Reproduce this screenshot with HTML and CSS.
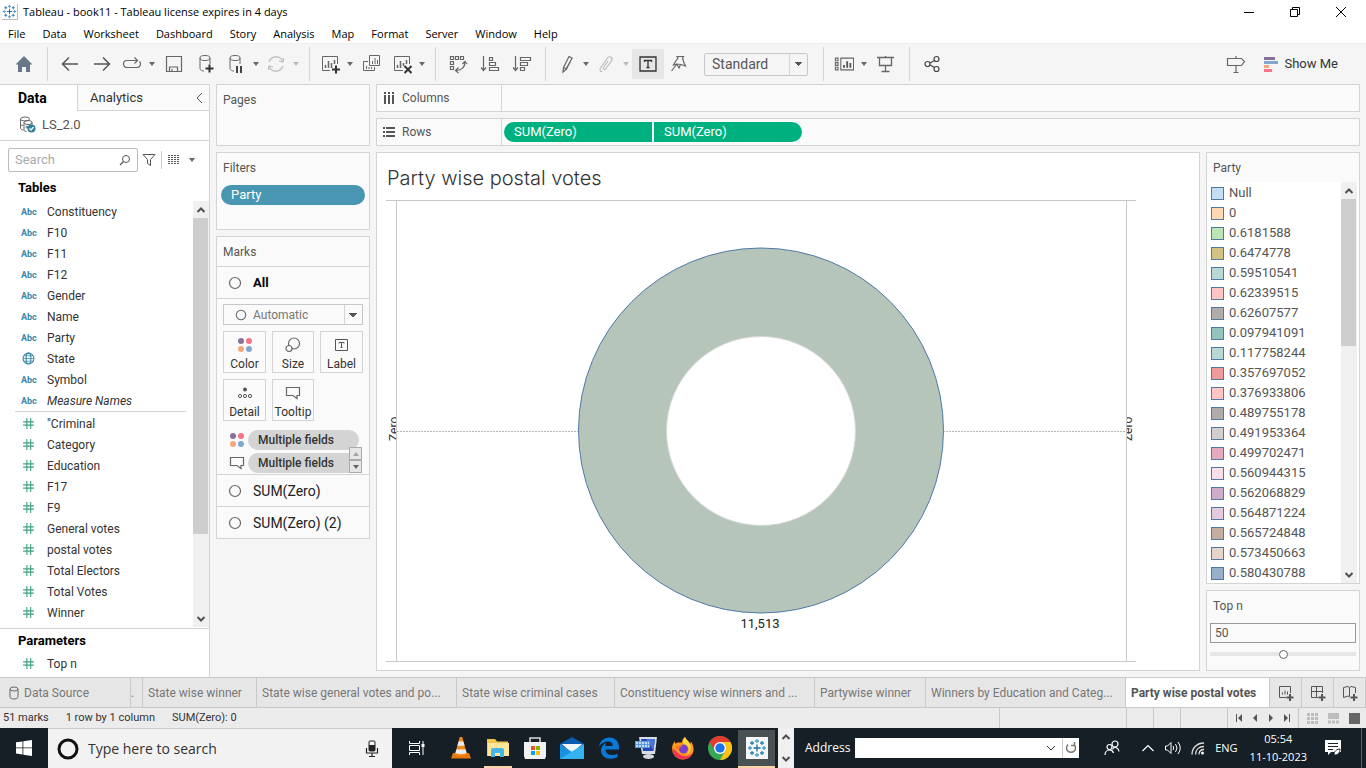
FILE: index.html
```html
<!DOCTYPE html>
<html lang="en">
<head>
<meta charset="utf-8">
<title>Tableau - book11</title>
<link rel="stylesheet" href="styles.css">
</head>
<body>
<svg class="defs" aria-hidden="true">
  <symbol id="hash" viewBox="0 0 12 12"><path d="M4.500 1v10M8 1v10M1 4.500h10M1 7.500h10" fill="none" stroke="#3aa17e" stroke-width="1"/></symbol>
  <symbol id="ring" viewBox="0 0 14 14"><circle cx="7" cy="7" r="5.500" fill="none" stroke="#666" stroke-width="1.200"/></symbol>
  <symbol id="dots" viewBox="0 0 16 16"><circle cx="4" cy="4" r="3" fill="#8a7199"/><circle cx="12" cy="4" r="3" fill="#fb7185"/><circle cx="4" cy="12" r="3" fill="#f4a77c"/><circle cx="12" cy="12" r="3" fill="#82a7cf"/></symbol>
  <symbol id="tip" viewBox="0 0 16 16"><path d="M1.500 2.500h13v8h-2.500v3l-4-3h-6.500z" fill="none" stroke="#666" stroke-width="1.200"/></symbol>
  <symbol id="up" viewBox="0 0 10 10"><path d="M1.500 7L5 3.500 8.500 7" fill="none" stroke="#505050" stroke-width="2"/></symbol>
  <symbol id="down" viewBox="0 0 10 10"><path d="M1.500 3L5 6.500 8.500 3" fill="none" stroke="#505050" stroke-width="2"/></symbol>
  <symbol id="tableau" viewBox="0 0 20 20"><g fill="none" stroke-width="1.300"><path d="M10 6.500v7M6.500 10h7" stroke="#1f6fa3"/><path d="M10 1v4M8 3h4M10 15v4M8 17h4M1 10h4M3 8v4M15 10h4M17 8v4" stroke="#4f9cc4"/><path d="M5 3v4M3 5h4M15 3v4M13 5h4M5 13v4M3 15h4M15 13v4M13 15h4" stroke="#2e7fb0"/></g></symbol>
  <symbol id="cyl" viewBox="0 0 20 20"><g fill="none" stroke="#666"><ellipse cx="9" cy="4" rx="5" ry="2.500"/><path d="M4 4v10.500c0 1.400 2 2.500 4 2.500M14 4v6"/></g></symbol>
</svg>

<header class="titlebar">
  <svg class="app-logo" viewBox="0 0 20 20"><use href="#tableau"/></svg>
  <h1 class="app-title">Tableau - book11 - Tableau license expires in 4 days</h1>
  <div class="win-buttons">
    <button aria-label="Minimize"><svg viewBox="0 0 12 12"><path d="M1 6.500h10" stroke="#000"/></svg></button>
    <button aria-label="Restore"><svg viewBox="0 0 12 12"><path d="M1.500 3.500h7v7h-7zM3.500 3.500v-2h7v7h-2" fill="none" stroke="#000"/></svg></button>
    <button aria-label="Close"><svg viewBox="0 0 12 12"><path d="M1 1l10 10M11 1L1 11" stroke="#000"/></svg></button>
  </div>
</header>

<nav class="menubar">
  <button>File</button><button>Data</button><button>Worksheet</button><button>Dashboard</button><button>Story</button><button>Analysis</button><button>Map</button><button>Format</button><button>Server</button><button>Window</button><button>Help</button>
</nav>

<div class="toolbar">
  <button class="tool" aria-label="Start page"><svg viewBox="0 0 20 20"><path d="M10 2l8.500 8.500H16V18h-4v-5H8v5H4v-7.500H1.500z" fill="#697886"/></svg></button>
  <span class="sep"></span>
  <button class="tool" aria-label="Undo"><svg viewBox="0 0 20 20"><path d="M2.500 10H18M9 3.500L2.500 10 9 16.500" fill="none" stroke="#555" stroke-width="1.500"/></svg></button>
  <button class="tool" aria-label="Redo"><svg viewBox="0 0 20 20"><path d="M2 10h15.500M11 3.500l6.500 6.500-6.500 6.500" fill="none" stroke="#555" stroke-width="1.500"/></svg></button>
  <button class="tool slim" aria-label="Replay"><svg viewBox="0 0 20 20"><path d="M8.500 13.500H5a3.500 3.500 0 0 1 0-7h10.500M12.500 3.500l3 3-3 3M17.500 7.500a3.500 3.500 0 0 1-2.500 6H8" fill="none" stroke="#666" stroke-width="1.200"/></svg></button>
  <button class="caret" aria-label="Replay options"></button>
  <button class="tool" aria-label="Save"><svg viewBox="0 0 20 20"><path d="M2.500 2.500h15v15h-15zM5.500 17v-4h8v4M8 17v-2" fill="none" stroke="#666" stroke-width="1.200"/></svg></button>
  <button class="tool" aria-label="New data source"><svg viewBox="0 0 20 20"><use href="#cyl"/><path d="M13.500 10.500v8M9.500 14.500h8" stroke="#333" stroke-width="2"/></svg></button>
  <button class="tool slim" aria-label="Pause updates"><svg viewBox="0 0 20 20"><use href="#cyl"/><path d="M11 12v7M15 12v7" stroke="#444" stroke-width="2"/></svg></button>
  <button class="caret" aria-label="Update options"></button>
  <button class="tool slim" aria-label="Run update"><svg viewBox="0 0 20 20"><path d="M3 8a7.500 7.500 0 0 1 13.500-1.500M17 12a7.500 7.500 0 0 1-13.500 1.500M17.500 4l-.5 4-4-1M2.500 16l.5-4 4 1" fill="none" stroke="#bbb" stroke-width="1.200"/></svg></button>
  <button class="caret faint" aria-label="Run options"></button>
  <span class="sep"></span>
  <button class="tool slim" aria-label="New worksheet"><svg viewBox="0 0 20 20"><path d="M10 16.500H2.500v-14h15V10" fill="none" stroke="#666"/><path d="M5.500 14v-3M8.500 14V7M11.500 14V9M14.500 10V6" stroke="#666" stroke-width="1.500"/><path d="M16 11.500v8M12 15.500h8" stroke="#333" stroke-width="2"/></svg></button>
  <button class="caret" aria-label="New options"></button>
  <button class="tool" aria-label="Duplicate"><svg viewBox="0 0 20 20"><path d="M7.500 1.500h10v10h-10zM6 7.500H1.500v9h11V13" fill="none" stroke="#666"/><path d="M10.500 10V7M13 10V4M15.500 10V6M4.500 15v-3M7 15v-2M9.500 15v-2" stroke="#666"/></svg></button>
  <button class="tool slim" aria-label="Clear sheet"><svg viewBox="0 0 20 20"><path d="M11 16.500H2.500v-14h15V10" fill="none" stroke="#666"/><path d="M5.500 14v-3M8.500 14V7M11.500 12V9M14.500 10V6" stroke="#666" stroke-width="1.500"/><path d="M12.500 12l7 7M19.500 12l-7 7" stroke="#333" stroke-width="2"/></svg></button>
  <button class="caret" aria-label="Clear options"></button>
  <span class="sep"></span>
  <button class="tool" aria-label="Swap rows and columns"><svg viewBox="0 0 20 20"><path d="M2.500 2.500h3v3h-3zM7.500 2.500h3v3h-3zM12.500 2.500h3v3h-3zM2.500 7.500h3v3h-3zM2.500 12.500h3v3h-3zM17 8c0 5-3 8-9 8.500M14.500 10L17 7.500l2 2.500M10.500 13.500L7.500 16.500l3 2.500" fill="none" stroke="#666" stroke-width="1.200"/></svg></button>
  <button class="tool" aria-label="Sort ascending"><svg viewBox="0 0 20 20"><path d="M3.500 2v14M1 13.500l2.500 3 2.500-3M9.500 3.500h3v3h-3zM9.500 8.500h6v3h-6zM9.500 13.500h9v3h-9z" fill="none" stroke="#666" stroke-width="1.200"/></svg></button>
  <button class="tool" aria-label="Sort descending"><svg viewBox="0 0 20 20"><path d="M3.500 2v14M1 13.500l2.500 3 2.500-3M8.500 3.500h10v3h-10zM8.500 8.500h7v3h-7zM8.500 13.500h4v3h-4z" fill="none" stroke="#666" stroke-width="1.200"/></svg></button>
  <span class="sep"></span>
  <button class="tool slim" aria-label="Highlight"><svg viewBox="0 0 20 20"><path d="M13 2.500l3 1.500-5.500 11-3.500 3 .5-4.500zM7.500 13.500l3 1.500M15 6L10 15" fill="none" stroke="#666" stroke-width="1.200"/></svg></button>
  <button class="caret" aria-label="Highlight options"></button>
  <button class="tool slim" aria-label="Group members"><svg viewBox="0 0 20 20"><path d="M12 7l-4.500 6.500c-1 1.500 1 3 2 1.500L15.500 7c2-3-2-6-4-3L4.500 14c-1.500 2.500.5 4 2 3.500" fill="none" stroke="#bbb" stroke-width="1.200"/></svg></button>
  <button class="caret faint" aria-label="Group options"></button>
  <button class="tool on" aria-label="Show mark labels"><svg viewBox="0 0 20 20"><path d="M2 3h16v14H2zM6.500 8V6.500h7V8M10 6.500v7M8.500 13.500h3" fill="none" stroke="#333" stroke-width="1.300"/></svg></button>
  <button class="tool slim" aria-label="Fix axes"><svg viewBox="0 0 20 20"><path d="M9 2.500h6.500l-1 1.500 1.500 5 1.500 3-4.500-1.500-4.500-.5-3 1 2-3.500 2.500-3.500zM8.500 10.500L3.500 17M9 10.500l2 3.500 1.500-3.500" fill="none" stroke="#666" stroke-width="1.200"/></svg></button>
  <select class="fit" aria-label="Fit"><option>Standard</option></select>
  <span class="sep"></span>
  <button class="tool slim" aria-label="Show or hide cards"><svg viewBox="0 0 22 20"><path d="M1.500 3.500h3v3h-3zM1.500 8.500h3v3h-3zM1.500 13.500h3v3h-3zM7.500 3.500h14v13h-14z" fill="none" stroke="#666" stroke-width="1.200"/><path d="M11 14v-3M14.500 14V7M18 14V9" stroke="#555" stroke-width="2"/></svg></button>
  <button class="caret" aria-label="Card options"></button>
  <button class="tool" aria-label="Presentation mode"><svg viewBox="0 0 20 20"><path d="M1 3.500h17M3.500 3.500v8h12v-8M9.500 2v1M9.500 11.500v6M5.500 17.500h8" fill="none" stroke="#666" stroke-width="1.300"/></svg></button>
  <span class="sep"></span>
  <button class="tool" aria-label="Share"><svg viewBox="0 0 20 20"><g fill="none" stroke="#444" stroke-width="1.200"><circle cx="5.500" cy="10" r="2.500"/><circle cx="14.500" cy="5" r="2.500"/><circle cx="14.500" cy="15" r="2.500"/><path d="M8 9l4.500-2.500M8 11l4.500 2.500"/></g></svg></button>
  <button class="tool end" aria-label="Guide"><svg viewBox="0 0 20 20"><path d="M1.500 4.500h14l3 3-3 4h-14zM10 2v2M10 11.500v7M7.500 18.500h5" fill="none" stroke="#666" stroke-width="1.200"/></svg></button>
  <button class="showme"><svg viewBox="0 0 14 16"><path d="M0 2.500h11" stroke="#8a7199" stroke-width="3"/><path d="M0 6.500h14" stroke="#82a7cf" stroke-width="3"/><path d="M0 10.500h5" stroke="#f4a77c" stroke-width="3"/><path d="M0 14.500h8" stroke="#fb7185" stroke-width="3"/></svg>Show Me</button>
</div>

<main class="work">
  <aside class="side">
    <div class="side-tabs">
      <button class="side-tab on">Data</button>
      <button class="side-tab">Analytics<svg viewBox="0 0 10 12"><path d="M8 1L3 6l5 5" fill="none" stroke="#555"/></svg></button>
    </div>
    <div class="source"><svg viewBox="0 0 18 18"><g fill="none" stroke="#666"><ellipse cx="6" cy="3" rx="4.500" ry="2"/><path d="M1.500 3v9c0 1 1 2 3 2M1.500 8c0 1 1 1.500 3 1.500"/><ellipse cx="9" cy="6.500" rx="4" ry="2"/><path d="M5 6.500V14c0 1 1 1.500 2.500 1.500M13 6.500V9M8 9.500v3M6.500 11h3"/></g><circle cx="12.500" cy="12.500" r="4" fill="#2f7f9f"/><path d="M10.500 12.500l1.500 1.500 2.500-3" fill="none" stroke="#fff" stroke-width="1.200"/></svg>LS_2.0</div>
    <div class="find">
      <label class="find-box"><input type="text" placeholder="Search" aria-label="Search"><svg viewBox="0 0 12 12"><circle cx="7" cy="5" r="3.500" fill="none" stroke="#555"/><path d="M4.500 7.500L1 11" stroke="#555" stroke-width="1.300"/></svg></label>
      <button class="find-btn" aria-label="Filter"><svg viewBox="0 0 14 14"><path d="M1 1.500h12l-4.500 5v6l-3-2v-4z" fill="none" stroke="#555"/></svg></button>
      <button class="find-btn as-list" aria-label="View as list"><svg viewBox="0 0 12 12"><path d="M0 1.500h12M0 3.500h12M0 5.500h12M0 7.500h12M0 9.500h12" stroke="#555" stroke-dasharray="2 1"/></svg><i class="tri"></i></button>
    </div>
    <h2 class="side-head">Tables</h2>
    <div class="fields">
      <div class="field-lists">
        <ul class="list">
          <li><b>Abc</b>Constituency</li><li><b>Abc</b>F10</li><li><b>Abc</b>F11</li><li><b>Abc</b>F12</li><li><b>Abc</b>Gender</li><li><b>Abc</b>Name</li><li><b>Abc</b>Party</li>
          <li><svg viewBox="0 0 12 12"><g fill="none" stroke="#3a87a5"><circle cx="6" cy="6" r="5"/><ellipse cx="6" cy="6" rx="2.200" ry="5"/><path d="M1 6h10M2 3.500h8M2 8.500h8" stroke-width=".7"/></g></svg>State</li>
          <li><b>Abc</b>Symbol</li><li><b>Abc</b><em>Measure Names</em></li>
        </ul>
        <ul class="list measures">
          <li><svg><use href="#hash"/></svg>"Criminal</li><li><svg><use href="#hash"/></svg>Category</li><li><svg><use href="#hash"/></svg>Education</li><li><svg><use href="#hash"/></svg>F17</li><li><svg><use href="#hash"/></svg>F9</li><li><svg><use href="#hash"/></svg>General votes</li><li><svg><use href="#hash"/></svg>postal votes</li><li><svg><use href="#hash"/></svg>Total Electors</li><li><svg><use href="#hash"/></svg>Total Votes</li><li><svg><use href="#hash"/></svg>Winner</li>
        </ul>
      </div>
      <div class="scroll"><button aria-label="Scroll up"><svg><use href="#up"/></svg></button><span class="thumb tall"></span><span class="track"></span><button aria-label="Scroll down"><svg><use href="#down"/></svg></button></div>
    </div>
    <section class="params">
      <h2 class="side-head">Parameters</h2>
      <ul class="list"><li><svg><use href="#hash"/></svg>Top n</li></ul>
    </section>
  </aside>

  <div class="cards">
    <section class="card pages"><h3>Pages</h3></section>
    <section class="card filters"><h3>Filters</h3><button class="pill blue">Party</button></section>
    <section class="card marks">
      <h3>Marks</h3>
      <button class="mark-row all"><svg><use href="#ring"/></svg>All</button>
      <div class="mark-body">
        <div class="type-box"><svg><use href="#ring"/></svg><select class="type" aria-label="Mark type"><option>Automatic</option></select></div>
        <div class="mark-grid">
          <button><svg><use href="#dots"/></svg>Color</button>
          <button><svg viewBox="0 0 16 16"><g fill="none" stroke="#666" stroke-width="1.200"><circle cx="9" cy="6.500" r="5.500"/><circle cx="4" cy="11.500" r="3" fill="#fafafa"/></g></svg>Size</button>
          <button><svg viewBox="0 0 16 16"><path d="M1.500 2.500h12v11h-12zM5 6.500V5.500h5v1M7.500 5.500v5M6.500 10.500h2" fill="none" stroke="#555"/></svg>Label</button>
          <button><svg viewBox="0 0 16 16"><circle cx="8" cy="4.500" r="2" fill="#555"/><g fill="none" stroke="#555"><circle cx="3" cy="11" r="1.600"/><circle cx="8" cy="11" r="1.600"/><circle cx="13" cy="11" r="1.600"/></g></svg>Detail</button>
          <button><svg><use href="#tip"/></svg>Tooltip</button>
        </div>
        <div class="mark-pills">
          <div><svg><use href="#dots"/></svg><button class="pill grey">Multiple fields</button></div>
          <div><svg><use href="#tip"/></svg><button class="pill grey">Multiple fields</button></div>
          <span class="spin"><button aria-label="Previous"><i class="tri flip"></i></button><button aria-label="Next"><i class="tri"></i></button></span>
        </div>
      </div>
      <button class="mark-row"><svg><use href="#ring"/></svg>SUM(Zero)</button>
      <button class="mark-row"><svg><use href="#ring"/></svg>SUM(Zero) (2)</button>
    </section>
  </div>

  <div class="stage">
    <div class="shelf"><div class="shelf-name"><svg viewBox="0 0 12 12"><path d="M2 0v2M6 0v2M10 0v2M2 3v9M6 3v9M10 3v9" stroke="#555" stroke-width="2"/></svg>Columns</div></div>
    <div class="shelf"><div class="shelf-name"><svg viewBox="0 0 12 12"><path d="M0 2h2M0 6h2M0 10h2M3 2h9M3 6h9M3 10h9" stroke="#555" stroke-width="2"/></svg>Rows</div><div class="shelf-pills"><button class="pill green left">SUM(Zero)</button><button class="pill green right">SUM(Zero)</button></div></div>
    <div class="stage-row">
      <section class="view">
        <h2 class="view-title">Party wise postal votes</h2>
        <svg class="chart" viewBox="0 0 750 462" role="img" aria-label="Donut chart of postal votes">
          <path d="M0 .5h750M0 461.500h750M10.500 0v462M740.500 0v462" stroke="#c8c8c8"/>
          <path d="M11 231.500h729" stroke="#b8b8b8" stroke-dasharray="2 1"/>
          <svg x="0" y="200" width="10" height="60"><text class="axis" transform="translate(12 41) rotate(-90)">Zero</text></svg>
          <svg x="741" y="200" width="9" height="60"><text class="axis" transform="translate(5 41) rotate(-90)">Zero</text></svg>
          <circle cx="375" cy="230.500" r="182.500" fill="#b6c5ba" stroke="#4e79a7"/>
          <circle cx="375" cy="231" r="94.500" fill="#fff" stroke="#d5d8d5"/>
          <text class="total" x="374" y="428" text-anchor="middle">11,513</text>
        </svg>
      </section>
      <div class="panels">
        <section class="card legend">
          <h3>Party</h3>
          <div class="legend-body">
            <ul>
              <li><i style="background:#c6def3"></i>Null</li><li><i style="background:#ffd8b2"></i>0</li><li><i style="background:#bce5b5"></i>0.6181588</li><li><i style="background:#d3c283"></i>0.6474778</li><li><i style="background:#b9d7d6"></i>0.59510541</li><li><i style="background:#ffc5c5"></i>0.62339515</li><li><i style="background:#b1abaa"></i>0.62607577</li><li><i style="background:#94c3bf"></i>0.097941091</li><li><i style="background:#b9d7d6"></i>0.117758244</li><li><i style="background:#f09b9b"></i>0.357697052</li><li><i style="background:#ffc5c5"></i>0.376933806</li><li><i style="background:#b1abaa"></i>0.489755178</li><li><i style="background:#d2cecd"></i>0.491953364</li><li><i style="background:#e5aabf"></i>0.499702471</li><li><i style="background:#fcdde8"></i>0.560944315</li><li><i style="background:#cfadc9"></i>0.562068829</li><li><i style="background:#e5cadf"></i>0.564871224</li><li><i style="background:#c4aca0"></i>0.565724848</li><li><i style="background:#e7d3ca"></i>0.573450663</li><li><i style="background:#96afcb"></i>0.580430788</li>
            </ul>
            <div class="scroll"><button aria-label="Scroll up"><svg><use href="#up"/></svg></button><span class="thumb short"></span><span class="track"></span><button aria-label="Scroll down"><svg><use href="#down"/></svg></button></div>
          </div>
        </section>
        <section class="card topn">
          <h3>Top n</h3>
          <input class="num" type="text" value="50" aria-label="Top n value">
          <input class="slider" type="range" min="0" max="100" value="50" aria-label="Top n slider">
        </section>
      </div>
    </div>
  </div>
</main>

<nav class="tabs">
  <button class="tab ds"><svg viewBox="0 0 10 14"><g fill="none" stroke="#666"><ellipse cx="5" cy="3" rx="4" ry="2"/><path d="M1 3v8c0 1 1.500 2 4 2s4-1 4-2V3"/></g></svg>Data Source</button>
  <button class="tab dot">.</button>
  <button class="tab w114">State wise winner</button>
  <button class="tab w200">State wise general votes and po...</button>
  <button class="tab w158">State wise criminal cases</button>
  <button class="tab w200">Constituency wise winners and ...</button>
  <button class="tab w111">Partywise winner</button>
  <button class="tab w200">Winners by Education and Categ...</button>
  <button class="tab on">Party wise postal votes</button>
  <button class="tab new" aria-label="New worksheet tab"><svg viewBox="0 0 16 16"><path d="M8 12.500H1.500v-11h11V8" fill="none" stroke="#555"/><path d="M4.500 9.500v-2M7 9.500v-4M9.500 9.500v-3" stroke="#555"/><path d="M12 9v7M8.500 12.500h7" stroke="#555" stroke-width="2"/></svg></button>
  <button class="tab new" aria-label="New dashboard tab"><svg viewBox="0 0 16 16"><path d="M8 12.500H1.500v-11h11V8M1.500 6.500h11M6.500 1.500v11" fill="none" stroke="#555"/><path d="M12 9v7M8.500 12.500h7" stroke="#555" stroke-width="2"/></svg></button>
  <button class="tab new" aria-label="New story tab"><svg viewBox="0 0 16 16"><path d="M8 12l-2-1-4.500 1.500v-10L6 1.500l1.500 1 1.500-1 4.500 1V8M7.500 2.500V11" fill="none" stroke="#555"/><path d="M12 9v7M8.500 12.500h7" stroke="#555" stroke-width="2"/></svg></button>
</nav>

<footer class="status">
  <span>51 marks</span><span>1 row by 1 column</span><span>SUM(Zero): 0</span>
  <div class="cells"><i class="c127"></i><i class="c27"></i><i class="c27"></i><i class="c47"></i>
    <div class="pager">
      <button aria-label="First"><svg viewBox="0 0 8 8"><path d="M1.500 0v8" stroke="#555"/><path d="M7 0v8L3 4z" fill="#555"/></svg></button>
      <button aria-label="Previous sheet"><svg viewBox="0 0 8 8"><path d="M6 0v8L2 4z" fill="#555"/></svg></button>
      <button aria-label="Next sheet"><svg viewBox="0 0 8 8"><path d="M2 0v8l4-4z" fill="#555"/></svg></button>
      <button aria-label="Last"><svg viewBox="0 0 8 8"><path d="M6.500 0v8" stroke="#555"/><path d="M1 0v8l4-4z" fill="#555"/></svg></button>
    </div>
    <div class="modes">
      <button aria-label="Sheet sorter"><svg viewBox="0 0 11 11"><path d="M0 1.500h11M0 5.500h11M0 9.500h11" stroke="#bdbdbd" stroke-width="3" stroke-dasharray="3 1"/></svg></button>
      <button aria-label="Filmstrip"><svg viewBox="0 0 11 11"><path d="M0 3h11" stroke="#bdbdbd" stroke-width="6"/><path d="M0 9h11" stroke="#bdbdbd" stroke-width="3" stroke-dasharray="3 1"/></svg></button>
      <button aria-label="Tabs"><svg viewBox="0 0 11 11"><path d="M0 0h11v11H0z" fill="#666"/></svg></button>
    </div>
  </div>
</footer>

<div class="taskbar">
  <button class="start" aria-label="Start"><svg viewBox="0 0 16 16"><path d="M0 2.300L6.500 1.400v6.100H0zM7.300 1.300L16 0v7.500H7.300zM0 8.300h6.500v6.200L0 13.600zM7.300 8.300H16V16l-8.700-1.300z" fill="#fff"/></svg></button>
  <label class="tsearch"><svg class="cortana" viewBox="0 0 24 24"><circle cx="12" cy="12" r="9" fill="none" stroke="#111" stroke-width="3"/></svg><input type="text" placeholder="Type here to search" aria-label="Type here to search"><svg class="mic" viewBox="0 0 14 18"><rect x="4" y="1" width="6" height="10" rx="1" fill="none" stroke="#222"/><path d="M4 5h6v6H4z" fill="#222"/><path d="M1.500 8v5h11V8M7 13v3.500M4 16.500h6" fill="none" stroke="#222" stroke-width="1.200"/></svg></label>
  <div class="apps">
    <button class="app view-btn" aria-label="Task view"><svg viewBox="0 0 20 20"><path d="M2.500 3v2.500h10V3M2.500 17v-2.500h10V17M2.500 7.500h10v5h-10zM16 3v14" fill="none" stroke="#fff"/><path d="M14.500 6h3v3h-3z" fill="#fff"/></svg></button>
    <button class="app" aria-label="VLC"><svg viewBox="0 0 24 24"><path d="M4 17h16l2 5.500H2z" fill="#e87809"/><path d="M10.700 1h2.600L18 18.500c-3 2-9 2-12 0z" fill="#f08a1c"/><path d="M9.600 5.500h4.800l1.200 4.300H8.400zM7.300 13.500h9.400l.9 3.500c-3 1.500-8 1.500-11.200 0z" fill="#e9edf1"/></svg></button>
    <button class="app run" aria-label="File Explorer"><svg viewBox="0 0 24 24"><path d="M1 3h8l2 2.500h11V20H1z" fill="#f3c74f"/><path d="M2 7h21v13H2z" fill="#ffe69a"/><path d="M5 21v-7q0-2 2-2h9q2 0 2 2v7h-4v-4H9v4z" fill="#42b6e8"/></svg></button>
    <button class="app" aria-label="Microsoft Store"><svg viewBox="0 0 24 24"><path d="M7 7V2h10v5" fill="none" stroke="#ddd" stroke-width="1.500"/><path d="M1 6h22v14l-1 3H2l-1-3z" fill="#f2f2f2"/><path d="M8 10h4v4H8z" fill="#f25022"/><path d="M13 10h4v4h-4z" fill="#7fba00"/><path d="M8 15h4v4H8z" fill="#00a4ef"/><path d="M13 15h4v4h-4z" fill="#ffb900"/></svg></button>
    <button class="app" aria-label="Mail"><svg viewBox="0 0 24 24"><path d="M0 8l12-7 12 7v2H0z" fill="#0a5cb0"/><path d="M2 8h20L12 18z" fill="#eef5fb"/><path d="M0 8l12 8 12-8v15H0z" fill="#1a91e0"/><path d="M2 8h20l-10 7.500z" fill="#eef5fb"/><path d="M0 23L24 8v15z" fill="#35b2f0"/></svg></button>
    <button class="app" aria-label="Edge"><svg viewBox="0 0 24 24"><path d="M2 10.500C3 5 7 1.500 12.500 1.500 18.500 1.500 22 6 22 11v2.500H8.500c.2 4 3 5.500 6.500 5.500 2 0 4-.5 5.500-1.500V21c-2 1.200-4.500 1.800-7 1.800-6 0-9.500-3.800-9.500-8.300C4 11 6 8 9.500 6.500c-.8 1-1.200 2-1.300 3.500h7.500c0-3-1.500-4.500-4.500-4.500C7.500 5.500 4 7.500 2 10.500z" fill="#0b78d7"/></svg></button>
    <button class="app" aria-label="On-screen keyboard"><svg viewBox="0 0 24 24"><path d="M5 1h18l-2 17H8z" fill="#d9dde6"/><path d="M7 3h14l-1.500 12H9z" fill="#2248b8"/><path d="M12 3h9l-1.500 11z" fill="#4b73d8"/><ellipse cx="14.500" cy="20.500" rx="5.500" ry="2.500" fill="#d3d5db"/><path d="M1 5h15v7H1z" fill="#5b9ad8"/><path d="M2 7h13M2 10h13" stroke="#e8f2fb" stroke-width="1.500" stroke-dasharray="2 1"/></svg></button>
    <button class="app" aria-label="Firefox"><svg viewBox="0 0 24 24"><path d="M14 1c1 3 4 4 5 7 1-1 1-2 .5-3 2.500 3 3.500 6.500 3 10A11 11 0 0 1 12 23.500 11 11 0 0 1 1 13c0-4 1.500-6 3-8v3c1-1 2-1.500 4-1.500h3C11 4 12 2.500 14 1z" fill="#ff9a1f"/><path d="M14 1c1 3 4 4 5 7 2 5 0 9-3 10 5-6-1-10-4-10 0-3 0-5 2-7z" fill="#ffd93b"/><path d="M1.500 12C1.500 20 7 23.500 12 23.500c5 0 9-3 10-7-3 3-5 3.500-8 3.500-6 0-8-5-12.500-8z" fill="#f5344f"/><circle cx="12.500" cy="13" r="4.500" fill="#7a3fd0"/><path d="M4 10c4 0 6-1 8 0-2 1-4 1-4 4-2-1-4-2-4-4z" fill="#ff7a1a"/></svg></button>
    <button class="app" aria-label="Chrome"><svg viewBox="0 0 24 24"><circle cx="12" cy="12" r="12" fill="#34a853"/><path d="M1.600 6A12 12 0 0 1 22.400 6H12l-5.200 9z" fill="#e33b2e"/><path d="M22.400 6A12 12 0 0 1 12 24l5.200-9L12 6z" fill="#fbc116"/><circle cx="12" cy="12" r="6" fill="#fff"/><circle cx="12" cy="12" r="4.700" fill="#1a73e8"/></svg></button>
    <button class="app run active" aria-label="Tableau"><svg viewBox="-2 -2 24 24"><path d="M-1-1h22v22H-1z" fill="#f4f7f9"/><use href="#tableau" width="20" height="20"/></svg></button>
  </div>
  <div class="tscroll"><button aria-label="Toolbar up"><svg><use href="#up"/></svg></button><button aria-label="Toolbar down"><svg><use href="#down"/></svg></button></div>
  <label class="addr">Address<span class="addr-box"><input type="text"><svg viewBox="0 0 10 10"><path d="M1 3l4 4 4-4" fill="none" stroke="#333"/></svg></span></label>
  <button class="reload" aria-label="Refresh"><svg viewBox="0 0 12 12"><path d="M3 2.500a4.500 4.500 0 1 0 6 0M9.500 0v3.500H6" fill="none" stroke="#777" stroke-width="1.500"/></svg></button>
  <div class="tray">
    <button class="people" aria-label="People"><svg viewBox="0 0 16 16"><g fill="none" stroke="#fff" stroke-width="1.200"><circle cx="5.500" cy="7" r="2.500"/><path d="M1 15c0-3 2-5 4.500-5S9 11 9.500 13"/><circle cx="11" cy="4" r="3"/><path d="M8.500 9.500C9 8 10 7.500 11 7.500c2 0 3.500 1.500 4 4"/></g></svg></button>
    <button aria-label="Hidden icons"><svg viewBox="0 0 16 16"><path d="M2.500 11L8 5.500l5.500 5.500" fill="none" stroke="#fff" stroke-width="1.200"/></svg></button>
    <button aria-label="Volume"><svg viewBox="0 0 16 16"><path d="M.5 6h2l3.500-3.500v11L2.500 10h-2zM8 6q1.500 2 0 4M10.500 4q3 4 0 8M13 2q4.500 6 0 12" fill="none" stroke="#fff"/></svg></button>
    <button aria-label="Network"><svg viewBox="0 0 16 16"><path d="M2 14.500C2 8 7 3 14 3M5.500 14.500c0-5 3.500-8 8.500-8M9 14.500c0-3 2-5 5-5" fill="none" stroke="#ddd" stroke-width="1.300"/><circle cx="12.500" cy="13" r="1.500" fill="#fff"/></svg></button>
    <button class="lang">ENG</button>
    <button class="clock"><span>05:54</span><span>11-10-2023</span></button>
    <button class="notes" aria-label="Notifications"><svg viewBox="0 0 18 18"><path d="M1 1h16v12H7l-3 3v-3H1z" fill="#fff"/><path d="M4 4.500h10M4 7.500h10M4 10.500h5" stroke="#17212a" stroke-width="1.200"/><path d="M10 16c0-4 3-6 6-6 0 4-2 6-6 6z" fill="#fff" stroke="#17212a"/></svg></button>
  </div>
  <button class="peek" aria-label="Show desktop"></button>
</div>
</body>
</html>
```

FILE: styles.css
```css
* { box-sizing: border-box; }
body {
  margin: 0;
  min-height: 100vh;
  display: flex;
  flex-direction: column;
  background: #f5f5f5;
  color: #333;
  font: 12px/20px Roboto, "Liberation Sans", sans-serif;
}
button, input, select { font: inherit; color: inherit; border: 0; padding: 0; margin: 0; background: none; border-radius: 0; }
button { display: flex; align-items: center; white-space: nowrap; }
h1, h2, h3, ul { margin: 0; padding: 0; font: inherit; list-style: none; }
svg { flex: none; display: block; }
.defs { position: absolute; width: 0; height: 0; }

/* window chrome */
.titlebar { display: flex; align-items: center; height: 24px; padding: 0 2px 0 2px; background: #fff; color: #000; font: 11px/16px "Open Sans", sans-serif; }
.app-logo { width: 16px; height: 16px; border: 1px solid #bbb; border-width: 0 1px 1px 0; }
.app-title { margin-left: 5px; flex: 1; }
.win-buttons { display: flex; }
.win-buttons button { width: 46px; height: 20px; justify-content: center; }
.win-buttons svg { width: 12px; height: 12px; }
.menubar { display: flex; gap: 17px; height: 19px; padding-left: 8px; background: #fff; color: #000; font: 11px/16px "Open Sans", sans-serif; }

/* toolbar */
.toolbar { display: flex; align-items: center; height: 41px; padding: 0 28px 0 8px; border-top: 1px solid #eee; }
.tool { width: 32px; height: 30px; justify-content: center; }
.tool.slim { width: 28px; }
.tool svg { width: 20px; height: 20px; }
.tool.on { background: #e6e6e6; }
.tool.end { margin-left: auto; }
.sep { width: 1px; height: 34px; margin: 0 6px 0 7px; background: #d4d4d4; }
.caret { width: 12px; height: 30px; justify-content: center; }
.caret::after, .tri { content: ""; border: 3px solid transparent; border-top: 4px solid #666; border-bottom: 0; }
.caret.faint::after { border-top-color: #bbb; }
.fit { width: 104px; height: 23px; margin: 0 8px 0 12px; padding-left: 7px; font-size: 14px; color: #555; border: 1px solid #c8c8c8; border-radius: 2px; }
.fit, .type {
  appearance: none;
  background: linear-gradient(#d4d4d4, #d4d4d4) right 17px top 0 / 1px 100% no-repeat,
    linear-gradient(45deg, transparent 50%, #555 50%) right 8px center / 4px 4px no-repeat,
    linear-gradient(-45deg, transparent 50%, #555 50%) right 4px center / 4px 4px no-repeat;
}
/* downward triangle drawn from two right-angled halves */
.fit, .type {
  background: linear-gradient(#d4d4d4, #d4d4d4) right 17px top 0 / 1px 100% no-repeat,
    linear-gradient(45deg, transparent 50%, #555 50%) right 9px center / 4px 4px no-repeat,
    linear-gradient(-45deg, transparent 50%, #555 50%) right 5px center / 4px 4px no-repeat;
}
.showme { gap: 6px; margin-left: 12px; font-size: 13px; color: #333; }
.showme svg { width: 14px; height: 16px; }

/* work area */
.work { flex: 1; display: flex; gap: 6px; padding-right: 6px; }
.side { display: flex; flex-direction: column; width: 210px; flex: none; background: #fff; border: 1px solid #d4d4d4; border-width: 1px 1px 0 0; }
.side-tabs { display: flex; height: 26px; }
.side-tab { flex: 1; padding: 0 5px 0 12px; font-size: 13px; justify-content: space-between; background: #fafafa; border: 1px solid #d4d4d4; border-width: 0 0 1px 1px; }
.side-tab.on { flex: 0 0 77px; padding-left: 18px; font-size: 14px; font-weight: 700; color: #000; background: #fff; border: 0; }
.side-tab svg { width: 10px; height: 12px; }
.source { display: flex; align-items: center; gap: 5px; height: 30px; padding: 0 0 2px 19px; color: #555; font-size: 13px; border-bottom: 1px solid #d4d4d4; }
.source svg { width: 18px; height: 18px; }
.find { display: flex; align-items: center; height: 38px; padding-left: 8px; }
.find-box { display: flex; align-items: center; width: 130px; height: 24px; padding: 0 6px; border: 1px solid #bbb; border-radius: 2px; }
.find-box input { flex: 1; min-width: 0; outline: 0; font-size: 13px; }
.find-box input::placeholder { color: #aaa; }
.find-box svg { width: 12px; height: 12px; }
.find-btn { height: 18px; margin-left: 4px; gap: 9px; }
.find-btn svg { width: 14px; height: 14px; }
.find-btn.as-list { margin-left: 5px; padding-left: 6px; border-left: 1px solid #ccc; }
.find-btn.as-list svg { width: 12px; height: 12px; }
.side-head { padding-left: 18px; font-size: 13px; line-height: 18px; font-weight: 700; color: #000; }
.fields { flex: 1; display: flex; margin-top: 4px; }
.field-lists { flex: 1; }
.list li { display: flex; align-items: center; height: 21px; padding-left: 21px; }
.list b, .list svg { width: 26px; flex: none; color: #3a87a5; font-size: 9px; }
.list b { font-weight: 700; }
.list svg { width: 13px; height: 13px; margin: 0 12px 0 1px; }
.measures { margin: 0 7px 0 15px; border-top: 1px solid #d4d4d4; padding-top: 1px; }
.measures li { padding-left: 6px; }
.scroll { display: flex; flex-direction: column; width: 16px; background: #f0f0f0; }
.fields .scroll { margin-bottom: 1px; }
.scroll button { height: 17px; justify-content: center; }
.scroll svg { width: 10px; height: 10px; }
.thumb { background: #cdcdcd; margin-right: 1px; }
.tall { flex: 314; }
.tall + .track { flex: 76; }
.short { flex: 147; }
.short + .track { flex: 220; }
.params { height: 49px; border-top: 1px solid #d4d4d4; }
.params .side-head { padding-top: 3px; }
.params .list { padding-top: 3px; }

.cards { display: flex; flex-direction: column; gap: 6px; width: 154px; flex: none; }
.card { background: #fafafa; border: 1px solid #d4d4d4; color: #555; }
.card h3 { height: 30px; padding: 5px 6px 0; font-size: 12px; }
.pages { height: 62px; }
.filters { height: 78px; }
.pill { height: 20px; padding: 0 10px; border-radius: 10px; color: #fff; }
.blue { width: 144px; margin: 2px 0 0 4px; background: #4996b2; font-size: 13px; }
.marks h3 { height: 29px; }
.mark-row { width: 100%; height: 32px; padding-left: 11px; gap: 11px; border-top: 1px solid #d4d4d4; font-size: 14px; color: #222; }
.mark-row svg { width: 14px; height: 14px; }
.all { font-size: 13px; font-weight: 700; color: #000; border-bottom: 1px solid #d4d4d4; height: 33px; }
.mark-body { padding: 5px 6px 0; }
.type-box { position: relative; }
.type-box svg { position: absolute; left: 12px; top: 5px; width: 12px; height: 12px; }
.type { display: block; width: 100%; height: 21px; padding-left: 29px; color: #777; border: 1px solid #c8c8c8; }
.mark-grid { display: grid; grid-template-columns: 43px 42px 43px; justify-content: space-between; row-gap: 6px; margin-top: 6px; }
.mark-grid button { flex-direction: column; height: 42px; padding-top: 5px; gap: 1px; border: 1px solid #d4d4d4; color: #333; }
.mark-grid svg { width: 16px; height: 16px; }
.mark-pills { position: relative; display: grid; gap: 3px; margin: 9px 0 1px; }
.mark-pills > div { display: flex; align-items: center; gap: 4px; height: 20px; padding-left: 6px; }
.mark-pills svg { width: 16px; height: 16px; }
.grey { width: 111px; margin-left: -1px; background: #d4d4d4; color: #333; font-weight: 500; }
.spin { position: absolute; right: 1px; bottom: 0; display: grid; }
.spin button { width: 13px; height: 13px; justify-content: center; border: 1px solid #aaa; background: #e6e6e6; }
.flip { transform: rotate(180deg); opacity: .5; }

.stage { flex: 1; min-width: 0; display: flex; flex-direction: column; gap: 6px; padding-bottom: 6px; }
.shelf { display: flex; height: 28px; background: #fafafa; border: 1px solid #d4d4d4; }
.shelf-name { display: flex; align-items: center; gap: 7px; width: 125px; padding-left: 6px; color: #555; border-right: 1px solid #d4d4d4; }
.shelf-name svg { width: 12px; height: 12px; }
.shelf-pills { display: flex; align-items: center; gap: 2px; padding-left: 2px; }
.green { width: 148px; background: #00b180; font-size: 13px; }
.left { border-radius: 10px 0 0 10px; }
.right { border-radius: 0 10px 10px 0; }
.stage-row { flex: 1; display: flex; gap: 6px; }
.view { flex: 1; min-width: 0; padding: 10px 9px 0; background: #fff; border: 1px solid #d4d4d4; }
.view-title { height: 37px; padding: 3px 0 0 1px; font: 300 20px/24px Inter, Roboto, sans-serif; color: #333; }
.chart { width: 750px; max-width: 100%; }
.axis { font-size: 12px; fill: #333; }
.total { font-size: 13px; fill: #222; }
.panels { display: flex; flex-direction: column; gap: 6px; width: 154px; }
.legend { flex: 1; display: flex; flex-direction: column; }
.legend h3 { height: 29px; }
.legend-body { flex: 1; display: flex; background: #fff; }
.legend ul { flex: 1; padding-top: 1px; }
.legend li { display: flex; align-items: center; gap: 5px; height: 20px; padding-left: 4px; font-size: 13px; }
.legend i { width: 13px; height: 13px; border: 1px solid #4e79a7; }
.legend .scroll { margin-right: 2px; }
.topn { height: 81px; padding-bottom: 10px; }
.topn h3 { height: 32px; }
.num { display: block; width: calc(100% - 6px); height: 20px; margin-left: 3px; padding-left: 4px; border: 1px solid #999; }
.slider { display: block; appearance: none; width: calc(100% - 6px); height: 4px; margin: 9px 3px 0; background: #e6e6e6; }
.slider::-webkit-slider-thumb { appearance: none; width: 9px; height: 9px; border: 1px solid #666; border-radius: 50%; background: #fff; }

/* sheet tabs and status */
.tabs { display: flex; height: 31px; background: #e6e6e6; border: 1px solid #c8c8c8; border-width: 1px 0; }
.tab { min-width: 0; padding: 0 5px; color: #777; border-right: 1px solid #c8c8c8; overflow: hidden; }
.ds { flex: 0 0 131px; gap: 5px; padding-left: 9px; }
.ds svg { width: 10px; height: 14px; }
.dot { flex: 0 0 12px; padding: 0; }
.w111 { flex: 0 1 111px; }
.w114 { flex: 0 1 114px; }
.w158 { flex: 0 1 158px; }
.w200 { flex: 0 1 200px; }
.tab.on { flex: 1 0 auto; background: #fff; color: #555; font-weight: 700; }
.new { flex: 0 0 32px; justify-content: center; }
.new svg { width: 16px; height: 16px; }
.status { display: flex; align-items: center; gap: 17px; height: 20px; padding-left: 3px; background: #ebebeb; font-size: 11px; }
.cells { display: flex; margin-left: auto; align-self: stretch; }
.cells i, .pager, .modes { border-left: 1px solid #c8c8c8; }
.c127 { width: 127px; }
.c27 { width: 27px; }
.c47 { width: 47px; }
.pager { display: flex; width: 71px; padding-left: 3px; }
.pager button { width: 16px; justify-content: center; }
.pager svg { width: 8px; height: 8px; }
.modes { display: flex; gap: 10px; padding: 0 6px 0 8px; }
.modes svg { width: 11px; height: 11px; }

/* desktop taskbar */
.taskbar { display: flex; height: 40px; background: #151f25; color: #fff; font: 12px/18px "Open Sans", sans-serif; }
.start { width: 48px; justify-content: center; }
.start svg { width: 16px; height: 16px; }
.tsearch { display: flex; align-items: center; width: 344px; padding: 0 13px 0 8px; background: #f2f2f2; color: #333; border-top: 1px solid #ccc; }
.tsearch input { flex: 1; min-width: 0; margin-left: 8px; font-size: 14px; outline: 0; }
.tsearch input::placeholder { color: #333; }
.cortana { width: 24px; height: 24px; }
.mic { width: 14px; height: 18px; }
.apps { display: flex; }
.app { width: 37px; justify-content: center; border: solid transparent; border-width: 2px 0; }
.view-btn { width: 50px; }
.app svg { width: 24px; height: 24px; }
.view-btn svg { width: 20px; height: 20px; }
.run { border-bottom-color: #fbd5a5; }
.run:not(.active) { width: 28px; margin: 0 4px 0 5px; }
.active { background: #4a5153; background-clip: padding-box; }
.tscroll { display: flex; flex-direction: column; justify-content: space-between; width: 16px; margin-left: 3px; padding: 4px 3px; background: #f0f0f0; }
.tscroll svg { width: 10px; height: 10px; }
.addr { display: flex; align-items: center; gap: 5px; margin-left: 11px; }
.addr-box { display: flex; align-items: center; width: 208px; height: 20px; padding-right: 6px; background: #fff; border-right: 1px solid #ccc; }
.addr-box input { flex: 1; min-width: 0; outline: 0; color: #000; }
.addr-box svg { width: 10px; height: 10px; }
.reload { align-self: center; width: 16px; height: 20px; justify-content: center; background: #fff; }
.reload svg { width: 12px; height: 12px; }
.tray { display: flex; margin-left: auto; gap: 9px; padding-right: 19px; }
.tray svg { width: 16px; height: 16px; }
.people { margin-right: 11px; }
.lang { font-size: 11px; }
.clock { flex-direction: column; justify-content: center; font-size: 11px; line-height: 18px; margin-left: 3px; }
.notes { margin-left: 8px; }
.tray .notes svg { width: 18px; height: 18px; }
.peek { width: 5px; border-left: 1px solid #5a6266; }
```
